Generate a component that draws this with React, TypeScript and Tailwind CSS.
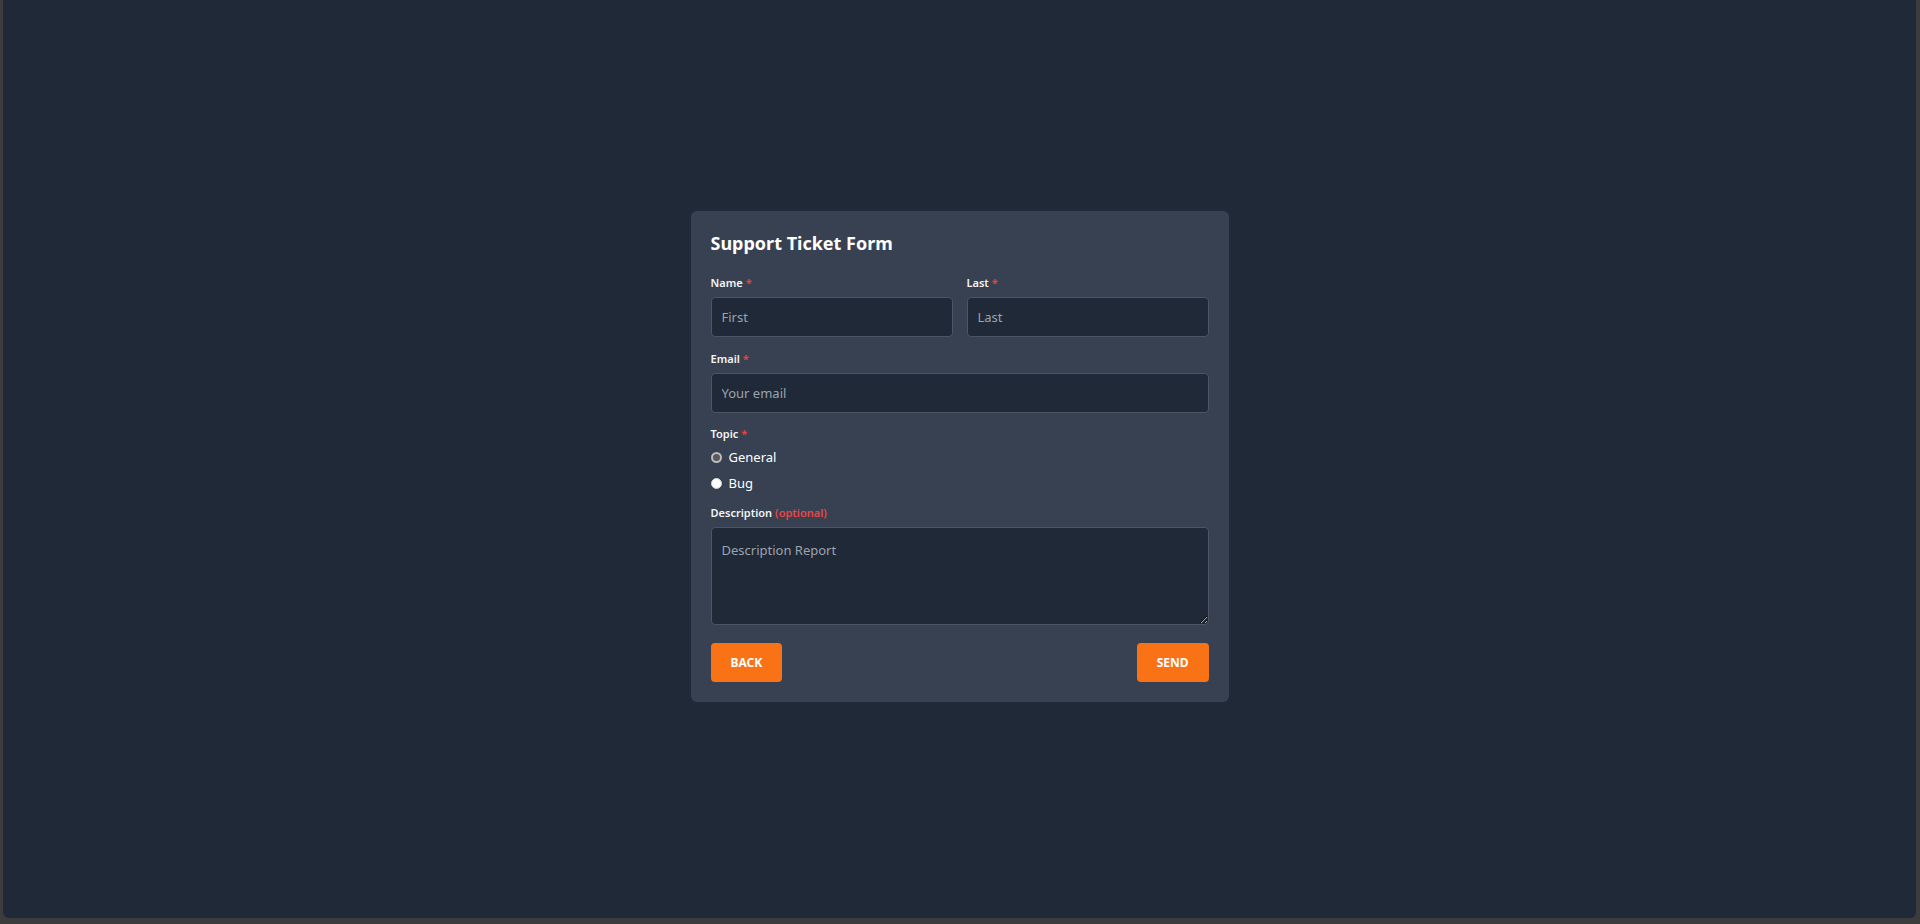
import React from "react";

function Required() {
  return <span className="ml-[3px] text-[#ef4444]">*</span>;
}

function FieldLabel({
  children,
  required,
  optional,
}: {
  children: React.ReactNode;
  required?: boolean;
  optional?: boolean;
}) {
  return (
    <label className="mb-1.5 block text-[11px] font-semibold leading-4 text-gray-100">
      {children}
      {required && <Required />}
      {optional && <span className="ml-[3px] text-[#ef4444]">(optional)</span>}
    </label>
  );
}

function TextInput({ placeholder }: { placeholder: string }) {
  return (
    <input
      type="text"
      placeholder={placeholder}
      className="block h-10 w-full rounded-[4px] border border-[#4b5563] bg-[#1f2937] px-2.5 text-[13px] text-gray-100 outline-none placeholder:text-[#9ca3af]"
    />
  );
}

function Radio({ label, checked }: { label: string; checked?: boolean }) {
  return (
    <div className="flex h-5 items-center gap-[7px]">
      {checked ? (
        <span className="h-[11px] w-[11px] rounded-full border-2 border-[#bcbcbc] bg-[#5a5a5a]" />
      ) : (
        <span className="h-[11px] w-[11px] rounded-full border border-[#d4d4d4] bg-white" />
      )}
      <span className="text-[13px] leading-5 text-white">{label}</span>
    </div>
  );
}

export default function App() {
  return (
    <div className="h-[924px] w-full bg-[#3c3c3c] font-['Noto_Sans',sans-serif]">
      <div className="ml-[3px] mr-[4px] flex h-[918px] justify-center rounded-b-[6px] bg-[#1f2937] pt-[211px]">
        <form className="h-fit w-[538px] rounded-[6px] bg-[#374151] px-5 pb-5 pt-5">
          {/* Header */}
          <h2 className="mb-5 text-[18px] font-bold leading-6 text-white">
            Support Ticket Form
          </h2>

          {/* Name */}
          <div className="grid grid-cols-2 gap-3.5">
            <div>
              <FieldLabel required>Name</FieldLabel>
              <TextInput placeholder="First" />
            </div>
            <div>
              <FieldLabel required>Last</FieldLabel>
              <TextInput placeholder="Last" />
            </div>
          </div>

          {/* Email */}
          <div className="mt-3.5">
            <FieldLabel required>Email</FieldLabel>
            <TextInput placeholder="Your email" />
          </div>

          {/* Topic */}
          <div className="mt-[13px]">
            <p className="mb-[5px] text-[11px] font-semibold leading-4 text-gray-100">
              Topic
              <Required />
            </p>
            <div className="flex flex-col gap-1.5">
              <Radio label="General" checked />
              <Radio label="Bug" />
            </div>
          </div>

          {/* Description */}
          <div className="mt-3">
            <FieldLabel optional>Description</FieldLabel>
            <textarea
              placeholder="Description Report"
              className="block h-[98px] w-full rounded-[4px] border border-[#4b5563] bg-[#1f2937] px-2.5 py-3 text-[13px] leading-5 text-gray-100 outline-none placeholder:text-[#9ca3af]"
            />
          </div>

          {/* Actions */}
          <div className="mt-[18px] flex items-center justify-between">
            <button
              type="button"
              className="h-[39px] rounded-[4px] bg-[#f97316] px-5 text-[12px] font-bold text-white"
            >
              BACK
            </button>
            <button
              type="button"
              className="h-[39px] rounded-[4px] bg-[#f97316] px-5 text-[12px] font-bold text-white"
            >
              SEND
            </button>
          </div>
        </form>
      </div>
    </div>
  );
}
